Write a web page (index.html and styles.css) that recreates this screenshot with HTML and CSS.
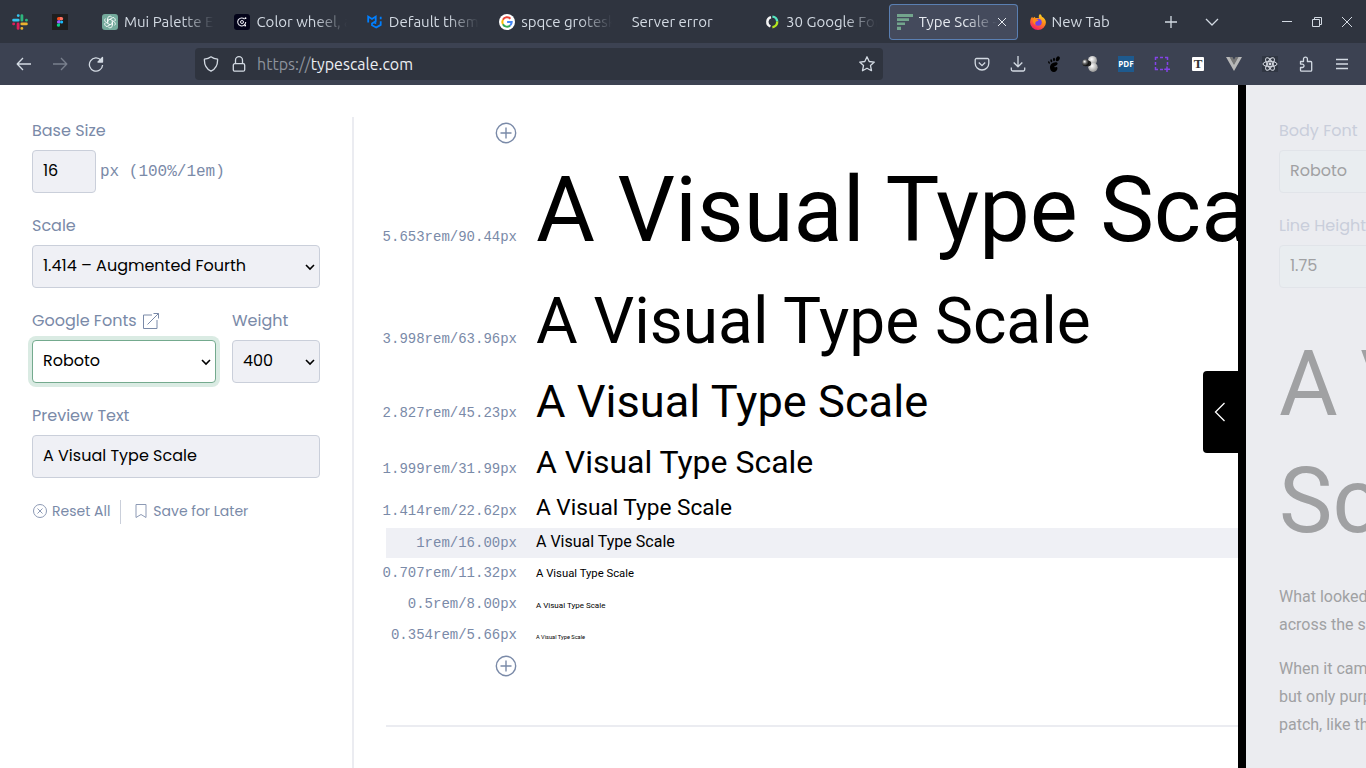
FILE: index.html
```html
<!DOCTYPE html>
<html lang="en">
<head>
<meta charset="utf-8">
<title>Type Scale - A Visual Calculator</title>
<link rel="stylesheet" href="styles.css">
</head>
<body>
<header class="browser">
  <nav class="tabs" aria-label="Tabs">
    <button class="tab pinned" aria-label="Slack">
      <svg class="ico" viewBox="0 0 16 16" fill="none" stroke-width="2.8" stroke-linecap="round"><path d="M1.6 6.2h4.6M6.2 1.6h.1" stroke="#36c5f0"/><path d="M9.9 1.6v4.6M14.4 6.2h.1" stroke="#2eb67d"/><path d="M9.8 9.9h4.6M9.8 14.4h.1" stroke="#ecb22e"/><path d="M6.1 9.9v4.5M1.6 9.9h.1" stroke="#e01e5a"/></svg>
    </button>
    <button class="tab pinned" aria-label="Figma">
      <svg class="ico" viewBox="0 0 16 16"><path fill="#1e1e1e" d="M0 0h16v16H0z"/><path fill="#f24e1e" d="M8 3H6.6a1.6 1.6 0 0 0 0 3.3H8z"/><path fill="#ff7262" d="M8 3h1.5a1.6 1.6 0 0 1 0 3.3H8z"/><path fill="#a259ff" d="M8 6.3H6.6a1.6 1.6 0 0 0 0 3.3H8z"/><circle cx="9.6" cy="8" r="1.6" fill="#1abcfe"/><path fill="#0acf83" d="M8 9.6H6.6A1.6 1.6 0 1 0 8 11.2z"/></svg>
    </button>
    <span class="pin-gap"></span>
    <button class="tab">
      <svg class="ico" viewBox="0 0 16 16"><rect width="16" height="16" rx="3" fill="#74aa9c"/><g fill="none" stroke="#fff" stroke-width=".9"><path d="M5.7 6.5V4.6a2.3 2.3 0 0 1 4-1.6M8 5.2l3-1.7a2.4 2.4 0 0 1 2 3.5"/><path d="M10.3 9.5v1.9a2.3 2.3 0 0 1-4 1.6M8 10.8l-3 1.700A2.400 2.400 0 0 1 3 9"/><path d="M5.7 9.4 4 8.4A2.4 2.4 0 0 1 3.4 4.6M5.7 8V4.6M10.3 6.6 12 7.6a2.4 2.4 0 0 1 .6 3.8M10.3 8v3.4M5.7 6.6 8 5.2l2.3 1.4v2.8L8 10.8 5.7 9.4z"/></g></svg>
      <span class="tab-title">Mui Palette Ext</span>
    </button>
    <button class="tab">
      <svg class="ico" viewBox="0 0 16 16"><rect width="16" height="16" rx="3" fill="#04041a"/><g fill="none" stroke="#e8e8f0"><path d="M10.6 5.2A4 4 0 1 0 11.7 8" stroke-width="1.1"/><circle cx="8" cy="8" r="1.5"/></g><g fill="#fff"><circle cx="11.5" cy="4.2" r=".9"/><circle cx="11.2" cy="11.5" r=".9"/></g></svg>
      <span class="tab-title">Color wheel, a c</span>
    </button>
    <button class="tab">
      <svg class="ico" viewBox="0 0 16 16" fill="none" stroke="#007fff" stroke-width="1.8"><path d="M1.2 8.5V2.6L5 4.9l3.7-2.3v4.6L5 9.4v1.8l4.2 2.3 4.5-2.6V7.2M13.7 5.2V2.7M7 8.2l2.2 1.3"/></svg>
      <span class="tab-title">Default theme</span>
    </button>
    <button class="tab">
      <svg class="ico" viewBox="0 0 16 16"><circle cx="8" cy="8" r="8" fill="#fff"/><g fill="none" stroke-width="2"><path d="M11.4 4.7A4.7 4.7 0 0 0 3.9 5.7" stroke="#ea4335"/><path d="M3.9 5.7a4.8 4.8 0 0 0 0 4.6" stroke="#fbbc05"/><path d="M3.9 10.3a4.7 4.7 0 0 0 7.2 1.2" stroke="#34a853"/><path d="M11.1 11.5A4.6 4.6 0 0 0 12.7 8H8.1" stroke="#4285f4"/></g></svg>
      <span class="tab-title">spqce grotesk</span>
    </button>
    <button class="tab"><span class="tab-title">Server error</span></button>
    <button class="tab">
      <svg class="ico" viewBox="0 0 16 16" fill="none" stroke-width="2.4"><path d="M7 3.2A4.9 4.9 0 0 0 6.4 12.5" stroke="#f4f4f4"/><path d="M8.4 2.6a5.2 5.2 0 0 1 4.8 4.9" stroke="#55e6c1"/><path d="M13.2 7.5a5.3 5.3 0 0 1-4.8 5.7" stroke="#b5e61d"/></svg>
      <span class="tab-title">30 Google Font</span>
    </button>
    <button class="tab active">
      <svg class="ico" viewBox="0 0 16 16" fill="#73a58d"><path d="M0 0h16v3H0zM0 4.3h12v2.6H0zM0 8.6h8v2.5H0zM0 12.8h4V16H0z"/></svg>
      <span class="tab-title">Type Scale -</span>
      <svg class="close" viewBox="0 0 10 10"><path d="M1 1l8 8M9 1L1 9"/></svg>
    </button>
    <button class="tab">
      <svg class="ico" viewBox="0 0 16 16"><defs><linearGradient id="fox" x1=".8" y1="0" x2=".3" y2="1"><stop offset="0" stop-color="#ffe226"/><stop offset=".45" stop-color="#ff8a16"/><stop offset="1" stop-color="#f5156c"/></linearGradient></defs><path fill="url(#fox)" d="M10 0c1.2.8 1.6 1.8 1.9 2.7 2.6 1.3 4 3.2 4 5.7a7.9 7.6 0 0 1-15.8 0C.1 6 1 4 2.2 2.8l.7 1.5 1.7-1.6 1 1.600C7 3.8 8.2 4 9 4.3 8.4 2.5 9 1 10 0z"/><circle cx="8.2" cy="8.3" r="3.5" fill="#7542e5"/><path fill="#ff8b17" d="M3 5.5c2-.8 4-.3 5.500 1-1 .7-2.300.6-3 1.800-.5 1-.2 2 .6 2.800C3.500 10.500 2.700 8 3 5.500z"/></svg>
      <span class="tab-title">New Tab</span>
    </button>
    <button class="strip-btn" aria-label="New tab"><svg class="line" viewBox="0 0 16 16"><path d="M8 2v12M2 8h12"/></svg></button>
    <span class="strip-gap"></span>
    <button class="strip-btn" aria-label="List tabs"><svg class="line" viewBox="0 0 16 16"><path d="M2 5l6 6 6-6"/></svg></button>
    <span class="window-gap"></span>
    <button class="win-btn" aria-label="Minimize"><svg class="thin" viewBox="0 0 16 16"><path d="M3 7.5h10"/></svg></button>
    <button class="win-btn" aria-label="Restore"><svg class="thin" viewBox="0 0 16 16"><path d="M3.5 5.5h7v7h-7zM5.5 5.5v-2h7v7h-2"/></svg></button>
    <button class="win-btn" aria-label="Close"><svg class="thin" viewBox="0 0 16 16"><path d="M3 3l10 10M13 3L3 13"/></svg></button>
  </nav>
  <div class="toolbar">
    <div class="tools">
      <button class="tool" aria-label="Back"><svg class="line" viewBox="0 0 16 16"><path d="M15 8H1.5M7 2L1.2 8 7 14"/></svg></button>
      <button class="tool dim" aria-label="Forward"><svg class="line" viewBox="0 0 16 16"><path d="M1 8h13.5M9 2l5.8 6L9 14"/></svg></button>
      <button class="tool" aria-label="Reload"><svg class="line" viewBox="0 0 16 16"><path d="M13 4.2A6.6 6.6 0 1 0 14.6 9"/><path d="M14.5 1.5V6H10z" fill="#d3dae3"/></svg></button>
    </div>
    <div class="address">
      <svg class="line" viewBox="0 0 16 16"><path d="M8 .8c2 1.6 4 2.2 6.6 2.4.2 5.6-1.8 9.6-6.6 12C3.2 12.8 1.2 8.8 1.4 3.2 4 3 6 2.4 8 .8z"/></svg>
      <svg class="line" viewBox="0 0 16 16"><rect x="2.3" y="7.7" width="11.4" height="7.5" rx="1.5"/><path d="M4.5 7.5V4.2a3.5 3.5 0 0 1 7 0v3.3"/></svg>
      <label class="url"><span class="scheme">https://</span><input type="text" aria-label="Address" value="typescale.com"></label>
      <svg class="line" viewBox="0 0 16 16"><path d="M8 .8l2.2 4.700 5.100.6-3.800 3.500 1 5.100L8 12.200l-4.500 2.500 1-5.100L.7 6.100l5.100-.6z"/></svg>
    </div>
    <div class="tools">
      <button class="tool" aria-label="Pocket"><svg class="line" viewBox="0 0 16 16"><path d="M2.500 2.500h11a1.300 1.300 0 0 1 1.300 1.300v3.400a6.800 6.800 0 0 1-13.600 0V3.800a1.300 1.300 0 0 1 1.300-1.300z"/><path d="M4.800 6.500L8 9.600l3.200-3.100"/></svg></button>
      <button class="tool" aria-label="Downloads"><svg class="line" viewBox="0 0 16 16"><path d="M8 0v10.500M3.700 6.500L8 10.700l4.300-4.200M1.300 11.500v2a1.500 1.500 0 0 0 1.500 1.500h10.400a1.500 1.500 0 0 0 1.500-1.500v-2"/></svg></button>
      <button class="tool" aria-label="GNOME"><svg class="ico" viewBox="0 0 16 16"><ellipse cx="11.800" cy="2.800" rx="1.800" ry="2.600" transform="rotate(25 11.800 2.800)"/><ellipse cx="8" cy="3.500" rx="1" ry="1.700"/><ellipse cx="5.300" cy="4.700" rx=".9" ry="1.500" transform="rotate(-15 5.300 4.700)"/><ellipse cx="3" cy="6.500" rx=".8" ry="1.300" transform="rotate(-25 3 6.500)"/><path d="M9.500 6.300c3-.2 2.600 2.600.2 3.400-1.300.5-2 1-1 1.500.8.400 1.200-.6 2.200-.2 1.200.6.300 4.600-2.600 4.900-2.500.2-4.300-2-4.300-4.500 0-2.700 2.400-5 5.500-5.100z"/></svg></button>
      <button class="tool" aria-label="Molecules"><svg class="ico" viewBox="0 0 16 16"><defs><radialGradient id="ball" cx=".4" cy=".35" r=".7"><stop offset="0" stop-color="#fff"/><stop offset="1" stop-color="#8d8d8d"/></radialGradient><radialGradient id="dark" cx=".35" cy=".35" r=".6"><stop offset="0" stop-color="#fff"/><stop offset=".5" stop-color="#666"/><stop offset="1" stop-color="#151515"/></radialGradient></defs><circle cx="10.500" cy="4.500" r="4.500" fill="url(#ball)"/><circle cx="11" cy="11.300" r="4.700" fill="url(#ball)"/><circle cx="6.500" cy="7.500" r="2.700" fill="#222"/><circle cx="3.700" cy="6.700" r="3.500" fill="url(#dark)"/></svg></button>
      <button class="tool" aria-label="PDF"><span class="pdf">PDF</span></button>
      <button class="tool" aria-label="Capture"><svg class="ico" viewBox="0 0 16 16" fill="none" stroke="#8443e8" stroke-width="1.500"><path d="M1.500 4V1.500H4M6 1.500h3M11 1.500h2.500V4M13.500 6v3M1.500 6v3M1.500 11v2.500H4M6 13.500h3M13 10.500V16M10.300 13.200H16"/></svg></button>
      <button class="tool" aria-label="Type inspector"><span class="note">T</span></button>
      <button class="tool" aria-label="Vue"><svg class="ico" viewBox="0 0 16 16"><path fill="#b8b8b8" d="M0 1h4l4 7 4-7h4L8 15z"/><path fill="#777" d="M3.500 1h3L8 3.800 9.500 1h3L8 9z"/></svg></button>
      <button class="tool" aria-label="React"><svg class="ico" viewBox="0 0 16 16"><path fill="#303642" d="M0 0h16v16H0z"/><g fill="none" stroke="#d8dce4"><ellipse cx="8" cy="8" rx="7" ry="2.700"/><ellipse cx="8" cy="8" rx="7" ry="2.700" transform="rotate(60 8 8)"/><ellipse cx="8" cy="8" rx="7" ry="2.700" transform="rotate(120 8 8)"/></g><circle cx="8" cy="8" r="1.400" fill="#d8dce4"/></svg></button>
      <button class="tool" aria-label="Extensions"><svg class="line" viewBox="0 0 16 16"><path d="M2.500 5.500h3V3a1.900 1.900 0 0 1 3.900 0v2.500h3.300a1 1 0 0 1 1 1v7.700a1 1 0 0 1-1 1H3.500a1 1 0 0 1-1-1v-2.700h1.800a1.700 1.700 0 0 0 0-3.400H2.500z"/></svg></button>
      <button class="tool" aria-label="Menu"><svg class="line" viewBox="0 0 16 16"><path d="M2 3.500h12M2 8h12M2 12.500h12"/></svg></button>
    </div>
  </div>
</header>

<div class="page">
  <form class="sidebar">
    <div class="field">
      <label for="base">Base Size</label>
      <div class="base-row"><input class="control base" id="base" type="text" value="16"><span class="unit">px (100%/1em)</span></div>
    </div>
    <div class="field">
      <label for="scale">Scale</label>
      <div class="picker"><select class="control" id="scale"><option>1.414 – Augmented Fourth</option></select><svg viewBox="0 0 10 10"><path d="M1 3l4 4 4-4"/></svg></div>
    </div>
    <div class="pair">
      <div class="field grow">
        <div class="label-row"><label for="font">Google Fonts</label><a href="#fonts" aria-label="Open Google Fonts"><svg class="open" viewBox="0 0 16 16"><path d="M9 2H.5v13.500H14V7M4.500 11.500l11-11M10.500.5h5v5"/></svg></a></div>
        <div class="picker"><select class="control focused" id="font"><option>Roboto</option></select><svg viewBox="0 0 10 10"><path d="M1 3l4 4 4-4"/></svg></div>
      </div>
      <div class="field weight">
        <label for="weight">Weight</label>
        <div class="picker"><select class="control" id="weight"><option>400</option></select><svg viewBox="0 0 10 10"><path d="M1 3l4 4 4-4"/></svg></div>
      </div>
    </div>
    <div class="field">
      <label for="preview">Preview Text</label>
      <input class="control" id="preview" type="text" value="A Visual Type Scale">
    </div>
    <div class="actions">
      <button class="action" type="button"><svg viewBox="0 0 16 16"><circle cx="8" cy="8" r="6.500"/><path d="M5.500 5.500l5 5M10.500 5.500l-5 5"/></svg>Reset All</button>
      <button class="action save" type="button"><svg viewBox="0 0 16 16"><path d="M3 1.500h10v13l-5-3-5 3z"/></svg>Save for Later</button>
    </div>
  </form>

  <main class="preview">
    <button class="add" aria-label="Add larger size"><svg viewBox="0 0 22 22"><circle cx="11" cy="11" r="9.700"/><path d="M11 5.500v11M5.500 11h11"/></svg></button>
    <div class="scale">
      <div class="step"><code>5.653rem/90.44px</code><span style="font-size:5.653rem">A Visual Type Scale</span></div>
      <div class="step"><code>3.998rem/63.96px</code><span style="font-size:3.998rem">A Visual Type Scale</span></div>
      <div class="step"><code>2.827rem/45.23px</code><span style="font-size:2.827rem">A Visual Type Scale</span></div>
      <div class="step"><code>1.999rem/31.99px</code><span style="font-size:1.999rem">A Visual Type Scale</span></div>
      <div class="step"><code>1.414rem/22.62px</code><span style="font-size:1.414rem">A Visual Type Scale</span></div>
      <div class="step current"><code>1rem/16.00px</code><span style="font-size:1rem">A Visual Type Scale</span></div>
      <div class="step"><code>0.707rem/11.32px</code><span style="font-size:0.707rem">A Visual Type Scale</span></div>
      <div class="step"><code>0.5rem/8.00px</code><span style="font-size:0.5rem">A Visual Type Scale</span></div>
      <div class="step"><code>0.354rem/5.66px</code><span style="font-size:0.354rem">A Visual Type Scale</span></div>
    </div>
    <button class="add" aria-label="Add smaller size"><svg viewBox="0 0 22 22"><circle cx="11" cy="11" r="9.700"/><path d="M11 5.500v11M5.500 11h11"/></svg></button>
    <hr class="rule">
  </main>

  <aside class="drawer">
    <button class="handle" aria-label="Open example"><svg viewBox="0 0 12 20"><path d="M10.500 1L1.500 10l9 9"/></svg></button>
    <div class="drawer-clip">
      <div class="drawer-body">
        <div class="field"><label for="body-font">Body Font</label><input class="control" id="body-font" type="text" value="Roboto"></div>
        <div class="field"><label for="line-height">Line Height</label><input class="control" id="line-height" type="text" value="1.75"></div>
        <h1 class="sample-title">A Visual<br>Scale</h1>
        <p>What looked like a small<br>across the sand in their</p>
        <p>When it came near enough<br>but only purple roots.<br>patch, like the spokes</p>
      </div>
    </div>
  </aside>
</div>
</body>
</html>
```
FILE: styles.css
```css
* { box-sizing: border-box; }

body {
  margin: 0;
  height: 100vh;
  display: flex;
  flex-direction: column;
  overflow: hidden;
  background: #fff;
  color: #000;
  font-family: Poppins, Inter, "Liberation Sans", sans-serif;
  font-size: 16px;
}

button {
  padding: 0;
  border: 0;
  background: none;
  color: inherit;
  font: inherit;
}

svg { flex: none; display: block; }

/* Browser window */
.browser {
  flex: none;
  background: #3c4252;
  color: #d3dae3;
  font-family: Ubuntu, "Noto Sans", sans-serif;
  font-size: 15px;
}

.tabs {
  display: flex;
  align-items: center;
  height: 43px;
  padding-right: 4px;
  background: #2f343f;
}

.tab {
  flex: 1 1 0;
  min-width: 0;
  height: 36px;
  display: flex;
  align-items: center;
  gap: 6px;
  padding: 0 12px 0 8px;
  border-radius: 4px;
  text-align: left;
}

.tab.pinned { flex: 0 0 40px; justify-content: center; padding: 0; }
.tab.active {
  flex: 0 0 129px;
  margin-right: 4px;
  padding-right: 8px;
  background: #444a5c;
  box-shadow: inset 0 0 0 1px #5a7fb2;
  color: #e6eaf0;
}
.pin-gap { flex: 0 0 14px; }

.tab-title {
  flex: 1;
  min-width: 0;
  overflow: hidden;
  white-space: nowrap;
  mask-image: linear-gradient(to right, #000 calc(100% - 32px), transparent 100%);
}
.active .tab-title { margin-right: -6px; }

.ico { width: 16px; height: 16px; }
.close { width: 10px; height: 10px; margin-right: 3px; fill: none; stroke: #e6eaf0; }
.line { width: 16px; height: 16px; fill: none; stroke: #d3dae3; stroke-width: 1.3; stroke-linejoin: round; }
.thin { width: 16px; height: 16px; fill: none; stroke: #d3dae3; }

.strip-btn { flex: 0 0 34px; display: grid; place-items: center; }
.strip-gap { flex: 0 0 7px; }
.window-gap { flex: 0 0 43px; }
.win-btn { flex: 0 0 30px; display: grid; place-items: center; }

.toolbar { display: flex; align-items: center; gap: 81px; height: 42px; padding: 0 6px; }
.tools { flex: none; display: flex; }
.tool { width: 36px; height: 32px; display: grid; place-items: center; }
.dim { opacity: .4; }

.address {
  flex: 1;
  min-width: 0;
  height: 32px;
  display: flex;
  align-items: center;
  gap: 12px;
  padding: 0 8px;
  border-radius: 4px;
  background: #2f343f;
}
.url { flex: 1; display: flex; margin-left: -2px; font-size: 16px; }
.scheme { color: #8d929c; }
.url input { flex: 1; min-width: 0; padding: 0; border: 0; outline: 0; background: none; color: #eceff4; font: inherit; }

.pdf {
  width: 16px;
  background: #1e5a8e;
  color: #fff;
  font: bold 8px/16px "Open Sans", sans-serif;
  text-align: center;
}
.note {
  width: 12px;
  border-radius: 1px;
  background: #fff;
  color: #333;
  font: bold 13px/14px "Liberation Serif", serif;
  text-align: center;
}

/* Page */
.page { flex: 1; min-height: 0; display: flex; }

.sidebar {
  flex: 0 0 352px;
  display: flex;
  flex-direction: column;
  gap: 19px;
  padding: 32px;
}

.field { display: flex; flex-direction: column; gap: 5px; color: #7a8aa8; line-height: 28px; }
.control {
  width: 100%;
  height: 43px;
  padding: 0 10px 2px;
  border: 1px solid #cacfda;
  border-radius: 4px;
  outline: 0;
  appearance: none;
  background: #eff0f5;
  color: #000;
  font: inherit;
}
.control.focused { border-color: #74aa8e; background: #fff; box-shadow: 0 0 0 4px #daebe3; }

.base-row { display: flex; align-items: center; gap: 4px; }
.control.base { width: 64px; }
.unit { font-family: "Liberation Mono", monospace; }

.picker { position: relative; }
.picker svg {
  position: absolute;
  right: 5px;
  top: 17px;
  width: 10px;
  height: 10px;
  fill: none;
  stroke: #000;
  stroke-width: 1.6;
  pointer-events: none;
}

.pair { display: flex; gap: 16px; }
.grow { flex: 1; }
.weight { flex: 0 0 88px; }
.label-row { display: flex; align-items: center; gap: 6px; }
.open { width: 16px; height: 16px; fill: none; stroke: #7a8aa8; }

.actions { display: flex; padding-top: 3px; color: #7a8aa8; font-size: 14px; }
.action { display: flex; align-items: center; gap: 4px; height: 24px; padding: 0 10px 2px 0; white-space: nowrap; }
.action svg { width: 16px; height: 16px; fill: none; stroke: #8d9ab5; }
.save { padding-left: 12px; border-left: 1px solid #cacfda; }

.preview {
  flex: 1;
  min-width: 0;
  margin-top: 32px;
  padding: 5px 0 0 32px;
  border-left: 2px solid #ebecf1;
  overflow: hidden;
}

.add { display: flex; justify-content: flex-end; width: 131px; }
.add svg { width: 22px; height: 22px; fill: none; stroke: #7a8aa8; stroke-width: 1.4; }

.scale { padding: 3px 0 4px; }
.step {
  display: grid;
  grid-template-columns: 131px 1fr;
  column-gap: 19px;
  align-items: baseline;
  align-content: center;
  min-height: 31px;
  padding: 5px 0;
  font-family: Roboto, sans-serif;
  line-height: 1.3;
  white-space: nowrap;
}
.step code { justify-self: end; color: #7a8aa8; font: 14px/18px "Liberation Mono", monospace; }
.step.current { min-height: 30px; padding: 4px 0; background: #eff0f5; }

.rule { height: 2px; margin: 48px 0 0; border: 0; background: #ebecf1; }

.drawer {
  position: relative;
  flex: 0 0 128px;
  min-width: 0;
  border-left: 8px solid #000;
  background: #ebecf0;
}
.drawer-clip { height: 100%; overflow: hidden; }
.drawer-body {
  width: 400px;
  padding: 32px 33px;
  color: #a0a1a3;
  font-family: Roboto, sans-serif;
  line-height: 28px;
  white-space: nowrap;
}
.drawer .field { margin-bottom: 19px; color: #c9cedb; font-family: Poppins, Inter, sans-serif; }
.drawer .control { border-color: #e1e4e9; background: #e9edf0; color: #a0a1a3; }
.sample-title { margin: 38px 0 23px; font-size: 90px; font-weight: 400; line-height: 117px; }
.drawer p { margin: 0 0 16px; }

.handle {
  position: absolute;
  top: 286px;
  right: 100%;
  width: 43px;
  height: 82px;
  display: flex;
  align-items: center;
  padding-left: 11px;
  border-radius: 4px 0 0 4px;
  background: #000;
}
.handle svg { width: 12px; height: 20px; fill: none; stroke: #fff; stroke-width: 1.3; }
```
